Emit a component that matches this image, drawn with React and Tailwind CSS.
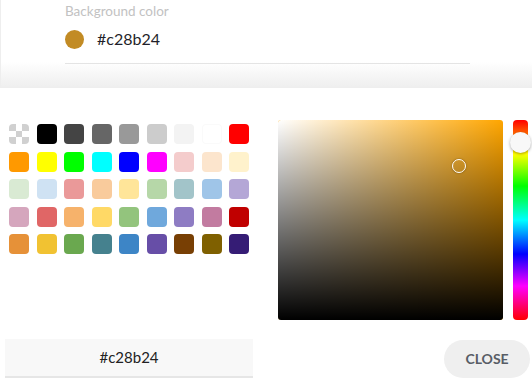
const swatches = [
  "checker", "#000000", "#444444", "#666666", "#999999", "#cccccc", "#f3f3f3", "#ffffff", "#ff0000",
  "#ff9900", "#ffff00", "#00ff00", "#00ffff", "#0000ff", "#ff00ff", "#f4cccc", "#fce5cd", "#fff2cc",
  "#d9ead3", "#cfe2f3", "#ea9999", "#f9cb9c", "#ffe599", "#b6d7a8", "#a2c4c9", "#9fc5e8", "#b4a7d6",
  "#d5a6bd", "#e06666", "#f6b26b", "#ffd966", "#93c47d", "#6fa8dc", "#8e7cc3", "#c27ba0", "#c00000",
  "#e69138", "#f1c232", "#6aa84f", "#45818e", "#3d85c6", "#674ea7", "#783f04", "#7f6000", "#351c75",
];

function Checker() {
  const cells = [1, 0, 1, 0, 1, 0, 1, 0, 1];
  return (
    <div className="grid h-[20px] w-[20px] grid-cols-3 overflow-hidden rounded-[4px]">
      {cells.map((c, i) => (
        <div key={i} className={c ? "bg-[#d0d0d0]" : "bg-white"} />
      ))}
    </div>
  );
}

export default function App() {
  return (
    <div className="h-[381px] w-[532px] overflow-hidden bg-white font-['Lato','Noto_Sans',sans-serif]">
      {/* field */}
      <div className="h-[88px] border-l border-[#eeeeee] bg-linear-to-b from-white from-70% to-[#eeeeee] pl-[64px] pt-[3px]">
        <div className="text-[13.5px] leading-[17px] text-[#c2c2c2]">Background color</div>
        <div className="mt-[9px] flex items-center gap-[13px]">
          <div className="h-[19px] w-[19px] rounded-full bg-[#c28b24]" />
          <span className="text-[16px] leading-[20px] text-[#1f1f2a]">#c28b24</span>
        </div>
        <div className="mt-[14px] h-px w-[405px] bg-[#e4e4e4]" />
      </div>

      {/* picker */}
      <div className="flex pt-[32px]">
        <div className="pl-[9px] pt-[4px]">
          <div className="grid grid-cols-[repeat(9,20px)] gap-[7.5px]">
            {swatches.map((c, i) =>
              c === "checker" ? (
                <Checker key={i} />
              ) : (
                <div
                  key={i}
                  className="h-[20px] w-[20px] rounded-[4px]"
                  style={{ backgroundColor: c, boxShadow: c === "#ffffff" ? "inset 0 0 0 1px #fafafa" : undefined }}
                />
              )
            )}
          </div>
        </div>

        <div className="ml-[29px] flex gap-[10px]">
          <div className="relative h-[200px] w-[225px] overflow-hidden rounded-[3px] bg-[#ffa600]">
            <div className="absolute inset-0 bg-linear-to-r from-white to-transparent" />
            <div className="absolute inset-0 bg-linear-to-t from-black to-transparent" />
            <div className="absolute left-[174px] top-[39px] h-[14px] w-[14px] rounded-full border-[1.5px] border-white shadow-[0_0_2px_rgba(0,0,0,0.4)]" />
          </div>
          <div className="relative h-[200px] w-[15px]">
            <div className="h-full w-full rounded-[4px] bg-[linear-gradient(to_bottom,#ff0000_0%,#ffff00_17%,#00ff00_33%,#00ffff_50%,#0000ff_67%,#ff00ff_83%,#ff0000_100%)]" />
            <div className="absolute left-[-3px] top-[12px] h-[21px] w-[21px] rounded-full bg-[#f8f8f8] shadow-[0_1px_3px_rgba(0,0,0,0.35)]" />
          </div>
        </div>
      </div>

      {/* footer */}
      <div className="mt-[19px] flex items-center pl-[5px] pr-[2px]">
        <div className="flex h-[39px] w-[248px] items-center justify-center border-b-2 border-[#e6e6e6] bg-[#f8f8f8] text-[15px] text-[#222]">
          #c28b24
        </div>
        <button className="ml-auto h-[38px] w-[86px] rounded-full bg-[#efefef] text-[14px] font-bold text-[#585d66]">
          CLOSE
        </button>
      </div>
    </div>
  );
}
